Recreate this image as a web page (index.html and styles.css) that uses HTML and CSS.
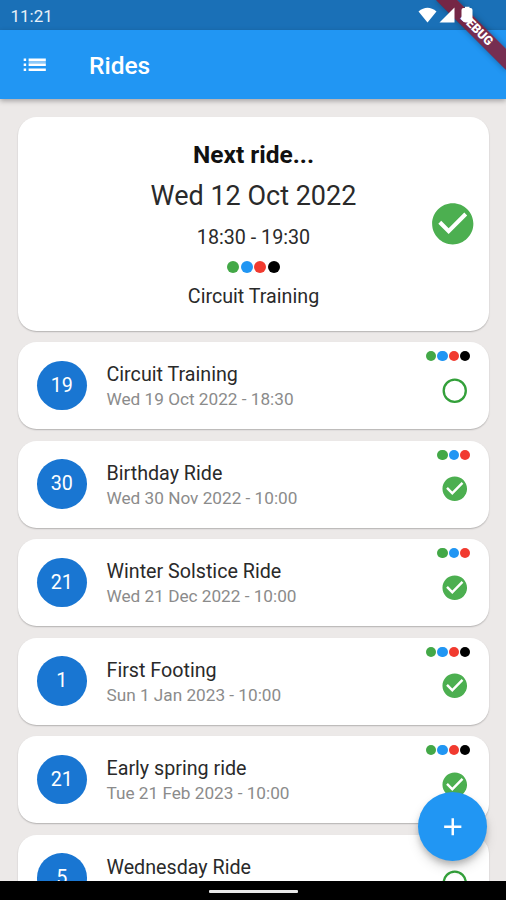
FILE: index.html
```html
<!DOCTYPE html>
<html lang="en">
<head>
<meta charset="utf-8">
<title>Rides</title>
<link rel="stylesheet" href="styles.css">
</head>
<body>
<svg class="defs" aria-hidden="true">
  <symbol id="check" viewBox="0 0 24 24"><path d="M12 2C6.480 2 2 6.480 2 12s4.480 10 10 10 10-4.480 10-10S17.520 2 12 2zm-2 15l-5-5 1.410-1.410L10 14.170l7.590-7.590L19 8l-9 9z"/></symbol>
  <symbol id="ring" viewBox="0 0 24 24"><circle cx="12" cy="12" r="9" fill="none" stroke="currentColor" stroke-width="1.900"/></symbol>
</svg>
<div class="phone">
  <div class="status">
    <span class="clock">11:21</span>
    <svg class="signals" viewBox="0 0 60 20" fill="#fff">
      <path d="M.5 5.500Q9.500-2 18.500 5.500L9.500 16.500z"/>
      <path d="M36.500 1.500v15H21.500z"/>
      <path d="M45.500 2h1.500V.800h4.500V2h1q2 0 2 2v10.500q0 2-2 2h-5q-2 0-4-3V4q0-2 2-2z"/>
    </svg>
  </div>
  <header class="appbar">
    <svg class="menu" viewBox="0 0 24 24"><path d="M3 13h2v-2H3v2zm0 4h2v-2H3v2zm0-8h2V7H3v2zm4 4h14v-2H7v2zm0 4h14v-2H7v2zM7 7v2h14V7H7z"/><path d="M7 9h14v2H7z" opacity=".5"/></svg>
    <h1>Rides</h1>
  </header>
  <main class="list">
    <section class="card next">
      <div class="heading">Next ride...</div>
      <div class="date">Wed 12 Oct 2022</div>
      <div class="time">18:30 - 19:30</div>
      <div class="dots large"><i class="g"></i><i class="b"></i><i class="r"></i><i class="k"></i></div>
      <div class="name">Circuit Training</div>
      <svg class="bigcheck"><use href="#check"/></svg>
    </section>
    <section class="card ride">
      <div class="day">19</div>
      <div class="info"><div class="title">Circuit Training</div><div class="sub">Wed 19 Oct 2022 - 18:30</div></div>
      <div class="state"><div class="dots"><i class="g"></i><i class="b"></i><i class="r"></i><i class="k"></i></div><svg class="mark"><use href="#ring"/></svg></div>
    </section>
    <section class="card ride">
      <div class="day">30</div>
      <div class="info"><div class="title">Birthday Ride</div><div class="sub">Wed 30 Nov 2022 - 10:00</div></div>
      <div class="state"><div class="dots"><i class="g"></i><i class="b"></i><i class="r"></i></div><svg class="mark"><use href="#check"/></svg></div>
    </section>
    <section class="card ride">
      <div class="day">21</div>
      <div class="info"><div class="title">Winter Solstice Ride</div><div class="sub">Wed 21 Dec 2022 - 10:00</div></div>
      <div class="state"><div class="dots"><i class="g"></i><i class="b"></i><i class="r"></i></div><svg class="mark"><use href="#check"/></svg></div>
    </section>
    <section class="card ride">
      <div class="day">1</div>
      <div class="info"><div class="title">First Footing</div><div class="sub">Sun 1 Jan 2023 - 10:00</div></div>
      <div class="state"><div class="dots"><i class="g"></i><i class="b"></i><i class="r"></i><i class="k"></i></div><svg class="mark"><use href="#check"/></svg></div>
    </section>
    <section class="card ride">
      <div class="day">21</div>
      <div class="info"><div class="title">Early spring ride</div><div class="sub">Tue 21 Feb 2023 - 10:00</div></div>
      <div class="state"><div class="dots"><i class="g"></i><i class="b"></i><i class="r"></i><i class="k"></i></div><svg class="mark"><use href="#check"/></svg></div>
    </section>
    <section class="card ride">
      <div class="day">5</div>
      <div class="info"><div class="title">Wednesday Ride</div></div>
      <div class="state"><div class="dots"></div><svg class="mark"><use href="#ring"/></svg></div>
    </section>
  </main>
  <footer class="navbar"><span class="pill"></span></footer>
  <div class="ribbon">DEBUG</div>
  <button class="fab" aria-label="Add"><svg viewBox="0 0 24 24"><path d="M19 13h-6v6h-2v-6H5v-2h6V5h2v6h6v2z"/></svg></button>
</div>
</body>
</html>
```
FILE: styles.css
```css
* { box-sizing: border-box; }
body { margin: 0; font-family: Roboto, "Liberation Sans", sans-serif; color: #2a2a2a; }
.defs { display: none; }
.phone {
  position: relative;
  display: flex;
  flex-direction: column;
  width: 506px;
  height: 900px;
  overflow: hidden;
  background: #ece9e8;
}
.status {
  display: flex;
  flex: 0 0 30px;
  align-items: center;
  justify-content: space-between;
  padding: 2px 28px 0 10.500px;
  background: #1a70b7;
}
.clock { color: #e8f1f8; font-size: 17px; line-height: 20px; }
.signals { position: relative; z-index: 4; width: 60px; height: 20px; }
.appbar {
  position: relative;
  z-index: 2;
  display: flex;
  flex: 0 0 68.500px;
  align-items: center;
  padding: 0 20px;
  background: #2196f3;
  color: #fff;
  box-shadow: 0 2px 5px rgba(0, 0, 0, 0.3);
}
.menu { width: 29.500px; height: 29.500px; fill: #fff; }
h1 { margin: 3px 0 0 39.500px; font-size: 24.500px; font-weight: 500; line-height: 30px; }
.list {
  display: flex;
  flex: 1 1 0;
  flex-direction: column;
  gap: 11.400px;
  min-height: 0;
  overflow: hidden;
  padding: 18.500px 17px 0 18px;
}
.card {
  position: relative;
  flex: none;
  border-radius: 18.500px;
  background: #fff;
  box-shadow: 0 1px 1.500px rgba(0, 0, 0, 0.24);
}
.next {
  display: flex;
  flex-direction: column;
  align-items: center;
  height: 214px;
  padding-top: 20px;
  white-space: nowrap;
}
.heading { height: 35px; line-height: 35px; font-size: 24.500px; font-weight: 700; color: #111; }
.date { height: 49px; line-height: 49px; font-size: 27px; }
.time { height: 33px; line-height: 33px; font-size: 19.700px; }
.name { height: 34px; line-height: 34px; font-size: 19.700px; margin-top: 7.500px; }
.bigcheck { position: absolute; right: 12px; top: 82px; width: 49.500px; height: 49.500px; fill: #4caf50; }
.dots { display: flex; gap: 1px; height: 10px; }
.dots i { width: 10.200px; height: 10.200px; border-radius: 50%; }
.dots.large { gap: 1.300px; height: 12.300px; margin-top: 6.500px; }
.dots.large i { width: 12.300px; height: 12.300px; }
.g { background: #43a847; }
.b { background: #2196f3; }
.r { background: #f13a2f; }
.k { background: #000; }
.ride { display: flex; height: 87.050px; padding: 0 19px; }
.day {
  width: 49.500px;
  height: 49.500px;
  margin-top: 18.500px;
  border-radius: 50%;
  background: #1976d2;
  color: #fff;
  font-size: 19.700px;
  line-height: 50px;
  text-align: center;
}
.info { flex: 1; padding: 20px 0 0 20px; white-space: nowrap; }
.title { height: 25px; line-height: 25px; font-size: 19.700px; }
.sub { height: 24px; line-height: 25px; font-size: 17.200px; color: #8b8b8b; }
.state { display: flex; flex-direction: column; align-items: flex-end; padding-top: 8.800px; }
.mark { width: 29.500px; height: 29.500px; margin: 14.700px 1px 0 0; fill: #4caf50; color: #33a03a; }
.navbar { position: relative; z-index: 3; display: flex; flex: 0 0 19px; align-items: center; justify-content: center; background: #000; }
.pill { width: 89px; height: 3.500px; border-radius: 1px; background: #e8e8e8; margin-top: 2px; }
.ribbon {
  position: absolute;
  z-index: 3;
  top: 0;
  left: 506px;
  width: 98.500px;
  height: 14.800px;
  transform-origin: 0 0;
  transform: rotate(45deg) translate(-49.200px, 34.500px);
  background: rgba(140, 20, 40, 0.8);
  box-shadow: 0 0 6px rgba(0, 0, 0, 0.35);
  color: #fff;
  font-size: 12.500px;
  font-weight: 900;
  line-height: 14.800px;
  text-align: center;
}
.fab {
  position: absolute;
  z-index: 2;
  right: 19px;
  bottom: 39px;
  display: flex;
  align-items: center;
  justify-content: center;
  width: 69px;
  height: 69px;
  padding: 0;
  border: 0;
  border-radius: 50%;
  background: #2196f3;
  box-shadow: 0 4px 6px -1px rgba(0, 0, 0, 0.22), 0 7px 12px rgba(0, 0, 0, 0.13);
}
.fab svg { width: 29.500px; height: 29.500px; fill: #fff; }
```
